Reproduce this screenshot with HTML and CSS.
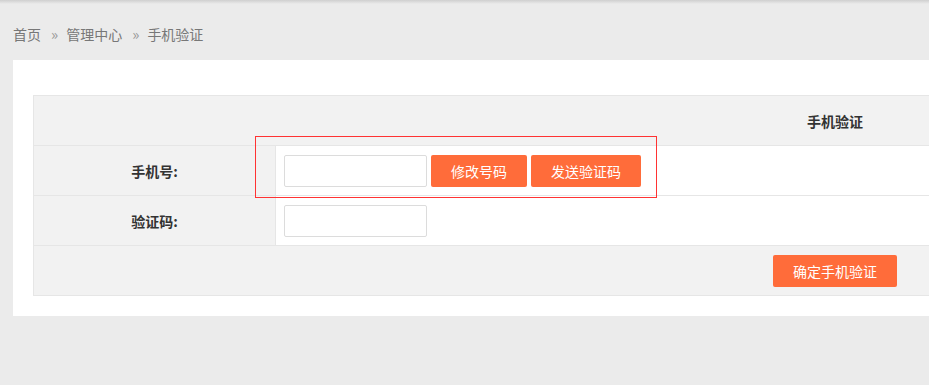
FILE: index.html
```html
<!DOCTYPE html>
<html lang="zh-CN">
<head>
<meta charset="utf-8">
<title>手机验证</title>
<link rel="stylesheet" href="styles.css">
</head>
<body>
<div class="page">
  <div class="crumbs">
    <a class="crumb">首页</a><span class="sep">»</span><a class="crumb">管理中心</a><span class="sep">»</span><span class="crumb">手机验证</span>
  </div>
  <div class="panel">
    <table class="form">
      <tr class="head"><th colspan="2">手机验证</th></tr>
      <tr>
        <td class="label">手机号:</td>
        <td class="value"><input class="txt" type="text"><button class="btn btn-mid">修改号码</button><button class="btn btn-wide">发送验证码</button></td>
      </tr>
      <tr>
        <td class="label">验证码:</td>
        <td class="value"><input class="txt" type="text"></td>
      </tr>
      <tr class="foot"><td colspan="2"><button class="btn btn-ok">确定手机验证</button></td></tr>
    </table>
  </div>
  <div class="mark"></div>
</div>
</body>
</html>
```
FILE: styles.css
```css
html, body {
  margin: 0;
  padding: 0;
}
body {
  background: #ebebeb linear-gradient(#cfcfcf, #ebebeb 4px) no-repeat;
  font-family: "Noto Sans CJK SC", "Liberation Sans", sans-serif;
  overflow: hidden;
  width: 929px;
  height: 385px;
}
.page {
  position: relative;
  width: 1700px;
}
.crumbs {
  padding: 24px 13px 16px;
  height: 20px;
  line-height: 20px;
  font-size: 14px;
  color: #777;
  display: flex;
  align-items: center;
}
.crumb {
  color: #777;
}
.sep {
  color: #999;
  font-size: 15px;
  padding: 0 8px 0 10px;
}
.panel {
  background: #fff;
  margin-left: 13px;
  width: 1644px;
  padding: 35px 20px 20px;
  box-sizing: border-box;
}
.form {
  width: 1604px;
  border-collapse: collapse;
  font-size: 14px;
  color: #333;
}
.form th, .form td {
  border: 1px solid #e6e6e6;
  height: 49px;
  padding: 0;
}
.head th {
  background: #f2f2f2;
  font-weight: bold;
  text-align: center;
}
.label {
  width: 241px;
  background: #f2f2f2;
  text-align: center;
  font-weight: bold;
}
.value {
  background: #fff;
  padding-left: 8px !important;
  font-size: 0;
}
.foot td {
  background: #f2f2f2;
  text-align: center;
  font-size: 0;
}
.txt {
  box-sizing: border-box;
  width: 143px;
  height: 32px;
  border: 1px solid #dcdcdc;
  border-radius: 2px;
  background: #fff;
  vertical-align: middle;
  margin: 0;
  padding: 0 6px;
}
.btn {
  box-sizing: border-box;
  height: 32px;
  border: 0;
  border-radius: 2px;
  background: #ff6c3a;
  color: #fff;
  font-family: "Noto Sans CJK SC", "Liberation Sans", sans-serif;
  font-size: 14px;
  padding: 0;
  margin: 0 0 0 4px;
  vertical-align: middle;
}
.btn-mid { width: 96px; }
.btn-wide { width: 110px; }
.btn-ok { width: 124px; margin: 0; }
.mark {
  position: absolute;
  left: 255px;
  top: 136px;
  width: 402px;
  height: 62px;
  box-sizing: border-box;
  border: 1px solid #ff3333;
  pointer-events: none;
}
```
